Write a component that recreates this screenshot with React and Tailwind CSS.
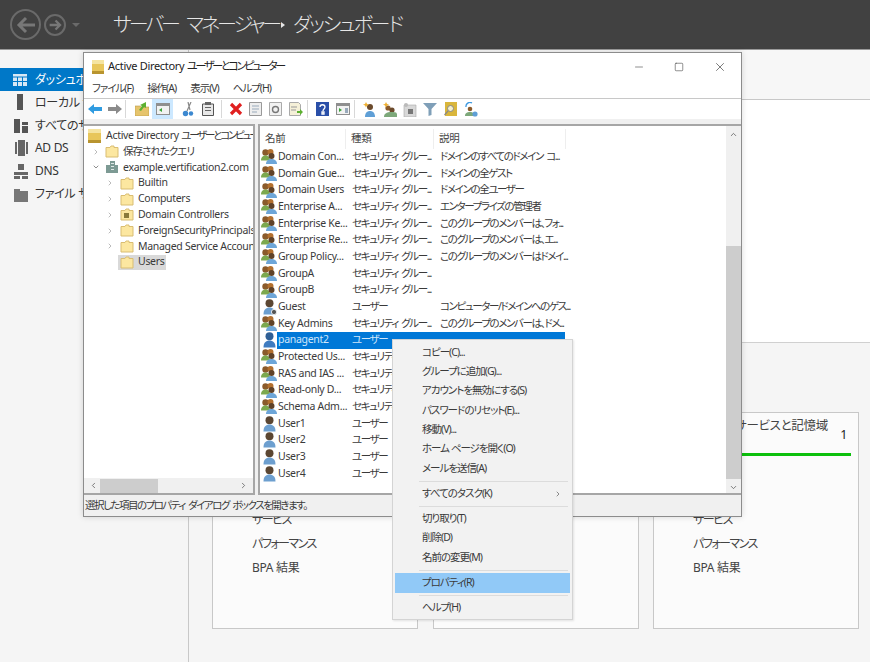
import { ChevronLeft, ChevronRight, ChevronDown, ChevronUp, Minus, X, Square } from "lucide-react";

const Folder = ({ badge }) => (
  <svg className="shrink-0" width="14" height="13" viewBox="0 0 14 13">
    <path d="M1 2.500h4l1-1.500h3v1.500h4v9.500H1z" fill="#fce7a0" stroke="#d9bd72" strokeWidth="1" />
    {badge && <rect x="4" y="5" width="5" height="5" fill="#8a7a3a" />}
  </svg>
);

const GroupIcon = () => (
  <svg className="shrink-0" width="16" height="15" viewBox="0 0 16 15">
    <circle cx="4.500" cy="3.500" r="3.200" fill="#8a5a2b" />
    <path d="M0 11.500c0-3.500 2-5 4.500-5s4.500 1.500 4.500 5z" fill="#7ca84e" />
    <circle cx="9.500" cy="3" r="3" fill="#b3702f" />
    <circle cx="10.500" cy="7" r="3" fill="#5f4229" />
    <path d="M5 15c0-3.500 2.500-5 5.500-5s5.500 1.500 5.500 5z" fill="#6ea6d8" />
  </svg>
);

const UserIcon = ({ dark, guest }) => (
  <svg className="shrink-0" width="14" height="16" viewBox="0 0 14 16">
    <circle cx="6.500" cy="4.200" r="4" fill={dark ? "#2f5f95" : "#5b4632"} />
    <path d="M0.500 15.500c0-5 2.500-7 6-7s6 2 6 7z" fill={dark ? "#3f7cc0" : "#6d9fcf"} />
    {guest && <circle cx="11" cy="13" r="2.600" fill="#555" stroke="#fff" strokeWidth="0.800" />}
  </svg>
);

const Sep = () => <div className="w-px h-[18px] bg-[#d8d8d8]" />;

const rows = [
  ["g", "Domain Con...", "セキュリティ グルー...", "ドメインのすべてのドメイン コ..."],
  ["g", "Domain Gue...", "セキュリティ グルー...", "ドメインの全ゲスト"],
  ["g", "Domain Users", "セキュリティ グルー...", "ドメインの全ユーザー"],
  ["g", "Enterprise A...", "セキュリティ グルー...", "エンタープライズの管理者"],
  ["g", "Enterprise Ke...", "セキュリティ グルー...", "このグループのメンバーは、フォ..."],
  ["g", "Enterprise Re...", "セキュリティ グルー...", "このグループのメンバーは、エ..."],
  ["g", "Group Policy...", "セキュリティ グルー...", "このグループのメンバーはドメイ..."],
  ["g", "GroupA", "セキュリティ グルー...", ""],
  ["g", "GroupB", "セキュリティ グルー...", ""],
  ["guest", "Guest", "ユーザー", "コンピューター/ドメインへのゲス..."],
  ["g", "Key Admins", "セキュリティ グルー...", "このグループのメンバーは、ドメ..."],
  ["sel", "panagent2", "ユーザー", ""],
  ["g", "Protected Us...", "セキュリティ グルー...", ""],
  ["g", "RAS and IAS ...", "セキュリティ グルー...", ""],
  ["g", "Read-only D...", "セキュリティ グルー...", ""],
  ["g", "Schema Adm...", "セキュリティ グルー...", ""],
  ["u", "User1", "ユーザー", ""],
  ["u", "User2", "ユーザー", ""],
  ["u", "User3", "ユーザー", ""],
  ["u", "User4", "ユーザー", ""],
];

const tree = [
  ["Builtin", false],
  ["Computers", false],
  ["Domain Controllers", true],
  ["ForeignSecurityPrincipals", false],
  ["Managed Service Accounts", false],
];

const side = [
  ["ローカル サーバー", "M4 0h6v16H4z", "#555"],
  ["すべてのサーバー", "M1 2h6v14H1zM9 5h6v3H9zM9 9h6v7H9z", "#555"],
  ["AD DS", "M2 2h2v12H2zM5 0h7v16H5zM13 2h2v12h-2z", "#666"],
  ["DNS", "M5 1h6v6H5zM1 9h14v3H1zM1 13h6v3H1zM9 13h6v3H9z", "#666"],
  ["ファイル サービスと記憶域", "M1 3h6v2h8v11H1z", "#777"],
];

const Card = ({ title, count }) => (
  <div className="w-[206px] h-[217px] border border-[#c8c8c8] bg-[#fbfbfb] relative">
    {title && (
      <div className="pl-[36px] pt-[5px] text-[12.5px] text-[#444] leading-[16px] whitespace-nowrap">{title}</div>
    )}
    {count && <div className="absolute right-[11px] top-[13px] text-[12.5px] text-[#222]">{count}</div>}
    <div className="absolute left-[14px] right-[7px] top-[40px] h-[3px] bg-[#0cc00c]" />
    <div className="absolute left-[39px] top-[99px] flex flex-col gap-[8px] text-[12px] leading-[16px] text-[#444] tracking-[-1.500px]">
      <div>サービス</div>
      <div>パフォーマンス</div>
      <div className="tracking-[-0.300px]">BPA 結果</div>
    </div>
  </div>
);

const MenuItem = ({ children, hl, arrow }) => (
  <div className={`h-[19.3px] pl-[27px] pr-[8px] flex items-center justify-between ${hl ? "bg-[#91c9f7]" : ""}`}>
    <span>{children}</span>
    {arrow && <ChevronRight size={8} strokeWidth={2} className="text-[#555]" />}
  </div>
);

const MenuSep = () => <div className="h-px bg-[#dcdcdc] my-[2.500px] ml-[24px] mr-[2px]" />;

export default function App() {
  return (
    <div className="relative w-[870px] h-[662px] overflow-hidden bg-white font-['Noto_Sans','Noto_Sans_CJK_JP',sans-serif] [font-feature-settings:'palt'] tracking-[-0.3px]">
      {/* header */}
      <div className="h-[50px] bg-[#414141] border-b border-[#9a9a9a] flex items-center">
        <div className="ml-[10px] w-[31px] h-[31px] rounded-full border-2 border-[#6a6a6a] flex items-center justify-center">
          <svg width="20" height="18" viewBox="0 0 20 18" fill="none" stroke="#777" strokeWidth="3">
            <path d="M19 9H3M10 2L3 9l7 7" />
          </svg>
        </div>
        <div className="ml-[3px] w-[22px] h-[22px] rounded-full border-2 border-[#6a6a6a] flex items-center justify-center">
          <svg width="13" height="12" viewBox="0 0 20 18" fill="none" stroke="#777" strokeWidth="3.500">
            <path d="M1 9h16M10 2l7 7-7 7" />
          </svg>
        </div>
        <div className="ml-[6px] w-0 h-0 border-x-[4px] border-x-transparent border-t-[4px] border-t-[#6a6a6a]" />
        <div className="ml-[33px] w-[158px] text-[20px] font-light tracking-[-3px] [word-spacing:6px] text-[#e6e6e6] whitespace-nowrap">サーバー マネージャー</div>
        <div className="ml-[10px] w-0 h-0 border-y-[3.500px] border-y-transparent border-l-[4px] border-l-[#e6e6e6]" />
        <div className="ml-[8px] text-[20px] font-light tracking-[-2.200px] text-[#e6e6e6] whitespace-nowrap">ダッシュボード</div>
      </div>

      <div className="flex h-[612px]">
        {/* sidebar */}
        <div className="w-[189px] bg-[#f5f5f5] border-r border-[#c8c8c8] pt-[18px] text-[12px] text-[#333]">
          <div className="h-[23px] bg-[#0078c8] flex items-center text-white">
            <svg className="ml-[13px] mr-[8px] shrink-0" width="14" height="12" viewBox="0 0 14 12">
              <path d="M0 0h14v12H0z" fill="#d8e8f5" />
              <path d="M0 3h14M4.500 3v9M9.500 3v9M0 7.500h14" stroke="#0078c8" />
            </svg>
            <span className="whitespace-nowrap pt-[1px]">ダッシュボード</span>
          </div>
          {side.map(([t, d, c]) => (
            <div key={t} className="h-[22.8px] flex items-center">
              <svg className="ml-[13px] mr-[6px] shrink-0" width="16" height="16" viewBox="0 0 16 16">
                <path d={d} fill={c} />
              </svg>
              <span className="whitespace-nowrap pt-[1px]">{t}</span>
            </div>
          ))}
        </div>

        {/* main */}
        <div className="flex-1 flex flex-col">
          <div className="h-[50px] bg-[#f7f7f7] border-b border-[#c8c8c8]" />
          <div className="h-[243px] bg-white border-b border-[#d0d0d0]" />
          <div className="flex-1 bg-[#f5f5f5] pl-[23px] pt-[69px] flex gap-[14.5px]">
            <Card />
            <Card />
            <Card title="ファイル サービスと記憶域" count="1" />
          </div>
        </div>
      </div>

      {/* AD window */}
      <div className="absolute left-[83px] top-[52px] w-[659px] h-[465px] bg-white border border-[#8c8c8c] flex flex-col text-[10.5px] text-[#3a3a3a] shadow-[0_0_6px_rgba(0,0,0,0.15)]">
        <div className="h-[27px] flex items-center shrink-0">
          <svg className="ml-[8px] mr-[4px]" width="12" height="14" viewBox="0 0 12 14">
            <path d="M0 0h12v14H0z" fill="#e8c65a" />
            <path d="M0 0h12v4H0z" fill="#f5e4a0" />
            <path d="M0 11h12v3H0z" fill="#b8942f" />
          </svg>
          <span className="text-[11px] text-[#222] whitespace-nowrap">
            Active Directory <span className="tracking-[-2.200px]">ユーザーとコンピューター</span>
          </span>
          <div className="ml-auto flex items-center text-[#444]">
            <Minus size={12} strokeWidth={1.2} className="mr-[29px]" />
            <Square size={10} strokeWidth={1.4} className="mr-[29px]" />
            <X size={14} strokeWidth={1.2} className="mr-[14px]" />
          </div>
        </div>
        <div className="h-[19px] flex items-center gap-[14px] pl-[8px] border-b border-[#c8c8c8] shrink-0 tracking-[-1px]">
          <span>ファイル(F)</span>
          <span>操作(A)</span>
          <span>表示(V)</span>
          <span>ヘルプ(H)</span>
        </div>

        {/* toolbar */}
        <div className="h-[20px] flex items-center shrink-0">
          <div className="ml-[3px] w-[15px] flex justify-center">
            <svg width="14" height="12" viewBox="0 0 14 12"><path d="M0 6l6-5v3h8v4H6v3z" fill="#2f9be0" /></svg>
          </div>
          <div className="ml-[5px] w-[15px] flex justify-center">
            <svg width="14" height="12" viewBox="0 0 14 12"><path d="M14 6L8 1v3H0v4h8v3z" fill="#8a8a8a" /></svg>
          </div>
          <div className="ml-[3px]"><Sep /></div>
          <div className="ml-[9px]">
            <svg width="14" height="14" viewBox="0 0 14 14">
              <path d="M0 4h5l1 1h8v9H0z" fill="#e6c46c" stroke="#b89b4a" strokeWidth="0.600" />
              <path d="M4 8l3-4-2-1 6-3v6l-2-1-3 4z" fill="#5cb030" />
            </svg>
          </div>
          <div className="ml-[3px] w-[21px] h-[20px] bg-[#cce8ff] flex items-center justify-center">
            <svg width="14" height="12" viewBox="0 0 14 12">
              <path d="M0 0h14v12H0z" fill="#8f8f8f" />
              <path d="M1 3h12v8H1z" fill="#f2f2f2" />
              <path d="M3 7l3-2v4z" fill="#3aa53a" />
            </svg>
          </div>
          <div className="ml-[9px]">
            <svg width="12" height="15" viewBox="0 0 12 15">
              <path d="M9 0L5 9M6 0l2 8" stroke="#888" strokeWidth="1.200" />
              <circle cx="3.500" cy="11.500" r="2.700" fill="#3c88d0" />
              <circle cx="9" cy="11.500" r="2.200" fill="#3c88d0" />
            </svg>
          </div>
          <div className="ml-[8px]">
            <svg width="12" height="14" viewBox="0 0 12 14">
              <path d="M0.500 2h11v11.500H0.500z" fill="#e8e8e8" stroke="#555" />
              <path d="M3 0h6v3H3zM3 5h6v1H3zM3 8h6v1H3z" fill="#666" />
            </svg>
          </div>
          <div className="ml-[7px]"><Sep /></div>
          <div className="ml-[7px]">
            <svg width="14" height="14" viewBox="0 0 14 14">
              <path d="M2 2l10 10M12 2L2 12" stroke="#e02020" strokeWidth="3.200" />
            </svg>
          </div>
          <div className="ml-[6px]">
            <svg width="13" height="14" viewBox="0 0 13 14">
              <path d="M0.500 0.500h12v13H0.500z" fill="#eee" stroke="#999" />
              <path d="M3 4h7M3 7h7M3 10h5" stroke="#9ab" />
            </svg>
          </div>
          <div className="ml-[7px]">
            <svg width="13" height="14" viewBox="0 0 13 14">
              <path d="M0.500 0.500h12v13H0.500z" fill="#f2f2f2" stroke="#aaa" />
              <circle cx="6.500" cy="7.500" r="3" fill="none" stroke="#777" strokeWidth="1.400" />
            </svg>
          </div>
          <div className="ml-[7px]">
            <svg width="14" height="14" viewBox="0 0 14 14">
              <path d="M0.500 0.500h9l2 2v11h-11z" fill="#f5f0d8" stroke="#aaa" />
              <path d="M2 5h6M2 8h5" stroke="#999" />
              <path d="M8 9h3V7l3 3-3 3v-2H8z" fill="#5cb030" />
            </svg>
          </div>
          <div className="ml-[4px]"><Sep /></div>
          <div className="ml-[8px]">
            <svg width="13" height="14" viewBox="0 0 13 14">
              <path d="M0 0h13v14H0z" fill="#2a4fa8" />
              <path d="M4 5c0-3 5-3 5 0 0 2-2 2-2 4M6 10h2v2H6z" fill="none" stroke="#fff" strokeWidth="1.300" />
            </svg>
          </div>
          <div className="ml-[7px]">
            <svg width="14" height="12" viewBox="0 0 14 12">
              <path d="M0 0h14v12H0z" fill="#8f8f8f" />
              <path d="M1 3h12v8H1z" fill="#f2f2f2" />
              <path d="M3 5l3 2-3 2z" fill="#3aa53a" />
              <path d="M9 5h3v5H9z" fill="#9ab" />
            </svg>
          </div>
          <div className="ml-[4px]"><Sep /></div>
          <div className="ml-[8px] flex items-center gap-[6px]">
            <svg width="14" height="15" viewBox="0 0 14 15">
              <circle cx="7" cy="5" r="3" fill="#6b4a2c" />
              <path d="M2 15c0-4 2-6 5-6s5 2 5 6z" fill="#5f9fd6" />
              <path d="M3 0l1 2 2 .5-2 1-1 2-1-2-2-1 2-.5z" fill="#f0b030" />
            </svg>
            <svg width="14" height="15" viewBox="0 0 14 15">
              <circle cx="5" cy="6" r="2.600" fill="#8a5a2b" />
              <circle cx="9" cy="8" r="2.600" fill="#6b4a2c" />
              <path d="M1 15c0-3 2-5 8-5s5 2 5 5z" fill="#7da87a" />
              <path d="M3 0l1 2 2 .5-2 1-1 2-1-2-2-1 2-.5z" fill="#f0b030" />
            </svg>
            <svg width="14" height="15" viewBox="0 0 14 15">
              <path d="M1 3h12v12H1z" fill="#d8d8d8" stroke="#aaa" strokeWidth="0.600" />
              <path d="M5 7h5v5H5z" fill="#777" />
              <circle cx="3" cy="3" r="2" fill="#bbb" />
            </svg>
            <svg width="14" height="14" viewBox="0 0 14 14">
              <path d="M0 1h14L8.500 7v6l-3 1V7z" fill="#7f9fb8" />
            </svg>
            <svg className="ml-[1px]" width="13" height="14" viewBox="0 0 13 14">
              <path d="M1 0h12v14H1z" fill="#d9b63c" />
              <circle cx="6.500" cy="6.500" r="3" fill="#f3eecb" stroke="#888" />
              <path d="M4 9l-3.500 4" stroke="#888" strokeWidth="1.200" />
            </svg>
            <svg width="15" height="15" viewBox="0 0 15 15">
              <path d="M3 5a4 4 0 0 1 6-4" fill="none" stroke="#3c98e0" strokeWidth="1.300" />
              <circle cx="7" cy="7" r="2.300" fill="#8a5a2b" />
              <path d="M2 14c0-3 2-4 5-4s4 1 4 4z" fill="#7da87a" />
              <circle cx="12" cy="12" r="2.600" fill="#5f9fd6" />
            </svg>
          </div>
        </div>
        <div className="h-[5px] bg-[#f0f0f0] shrink-0" />

        {/* panes */}
        <div className="h-[371px] flex bg-[#f0f0f0] shrink-0">
          {/* tree */}
          <div className="w-[171px] bg-white border-y-2 border-r-2 border-[#a6a6a6] flex flex-col overflow-hidden">
            <div className="flex-1 overflow-hidden pt-[1px]">
              <div className="h-[15.8px] mt-[1px] flex items-center pl-[4px] whitespace-nowrap">
                <svg className="mr-[5px] shrink-0" width="13" height="14" viewBox="0 0 13 14">
                  <path d="M0 0h13v14H0z" fill="#e8c65a" />
                  <path d="M0 0h13v4H0z" fill="#f5e4a0" />
                  <path d="M0 11h13v3H0z" fill="#b8942f" />
                </svg>
                <span>
                  Active Directory <span className="tracking-[-2.200px]">ユーザーとコンピューター</span>
                </span>
              </div>
              <div className="h-[15.8px] flex items-center pl-[8px] whitespace-nowrap">
                <ChevronRight size={8} className="text-[#999] mr-[5px] shrink-0" />
                <Folder />
                <span className="ml-[4px] tracking-[-1px]">保存されたクエリ</span>
              </div>
              <div className="h-[15.8px] flex items-center pl-[8px] whitespace-nowrap">
                <ChevronDown size={8} className="text-[#555] mr-[5px] shrink-0" />
                <svg width="14" height="14" viewBox="0 0 14 14" className="shrink-0">
                  <path d="M1 5h4v8H1zM5 1h5v12H5zM10 5h3v8h-3z" fill="#7d9a94" />
                  <path d="M6 3h3v1H6zM6 6h3v1H6zM6 9h3v1H6z" fill="#dfe8e6" />
                </svg>
                <span className="ml-[4px]">example.vertification2.com</span>
              </div>
              {tree.map(([t, badge]) => (
                <div key={t} className="h-[15.8px] flex items-center pl-[22px] whitespace-nowrap">
                  <ChevronRight size={8} className="text-[#999] mr-[6px] shrink-0" />
                  <Folder badge={badge} />
                  <span className="ml-[4px]">{t}</span>
                </div>
              ))}
              <div className="h-[15.8px] flex items-center pl-[34px] whitespace-nowrap">
                <div className="h-[15px] w-[48px] bg-[#d9d9d9] flex items-center pl-[2px]">
                  <Folder />
                  <span className="ml-[4px]">Users</span>
                </div>
              </div>
            </div>
            <div className="h-[15px] bg-[#f0f0f0] flex items-center shrink-0 px-[5px]">
              <ChevronLeft size={9} className="text-[#555] shrink-0" />
              <div className="w-[58px] h-[14px] bg-[#cdcdcd] ml-[2px]" />
              <ChevronRight size={9} className="text-[#555] shrink-0 ml-auto" />
            </div>
          </div>

          <div className="w-[3px]" />

          {/* list */}
          <div className="flex-1 bg-white border-y-2 border-l-2 border-[#a6a6a6] flex">
            <div className="flex-1 min-w-0">
              <div className="h-[22.5px] pt-[3px] flex items-stretch text-[#444]">
                <div className="w-[86px] pl-[5px] flex items-center border-r border-[#eee]">名前</div>
                <div className="w-[88px] pl-[5px] flex items-center border-r border-[#eee]">種類</div>
                <div className="w-[132px] pl-[5px] flex items-center border-r border-[#eee]">説明</div>
              </div>
              {rows.map(([k, name, type, desc]) => (
                <div key={name} className="h-[16.68px] flex items-center whitespace-nowrap">
                  <div className="w-[17px] shrink-0 flex justify-end">
                    {k === "g" && <GroupIcon />}
                    {k === "u" && <UserIcon />}
                    {k === "guest" && <UserIcon guest />}
                    {k === "sel" && <UserIcon dark />}
                  </div>
                  <div className={`h-full flex items-center w-[288px] ${k === "sel" ? "bg-[#0078d7] text-[#cfe6fa]" : ""}`}>
                    <div className="w-[75px] pl-[1px] shrink-0">{name}</div>
                    <div className="w-[88px] shrink-0 tracking-[-1.400px] [word-spacing:2px]">{type}</div>
                    <div className="tracking-[-1.400px] [word-spacing:2px]">{desc}</div>
                  </div>
                </div>
              ))}
            </div>
            <div className="w-[15px] bg-[#f0f0f0] flex flex-col items-center shrink-0">
              <ChevronUp size={9} className="text-[#555] mt-[4px] shrink-0" />
              <div className="w-full h-[233px] bg-[#cdcdcd] mt-[107px]" />
              <ChevronDown size={9} className="text-[#555] mt-[4px]" />
            </div>
          </div>
        </div>

        {/* status */}
        <div className="flex-1 bg-[#f0f0f0] flex items-center pl-[1px] whitespace-nowrap tracking-[-1.500px] [word-spacing:2px]">
          選択した項目のプロパティ ダイアログ ボックスを開きます。
        </div>
      </div>

      {/* context menu */}
      <div className="absolute left-[392px] top-[339px] w-[181px] h-[281px] bg-[#f2f2f2] border border-[#d4d4d4] pt-[3px] px-[2px] text-[10.5px] text-[#3a3a3a] tracking-[-1px] shadow-[1px_1px_2px_rgba(0,0,0,0.1)]">
        <MenuItem>コピー(C)...</MenuItem>
        <MenuItem>グループに追加(G)...</MenuItem>
        <MenuItem>アカウントを無効にする(S)</MenuItem>
        <MenuItem>パスワードのリセット(E)...</MenuItem>
        <MenuItem>移動(V)...</MenuItem>
        <MenuItem>ホーム ページを開く(O)</MenuItem>
        <MenuItem>メールを送信(A)</MenuItem>
        <MenuSep />
        <MenuItem arrow>すべてのタスク(K)</MenuItem>
        <MenuSep />
        <MenuItem>切り取り(T)</MenuItem>
        <MenuItem>削除(D)</MenuItem>
        <MenuItem>名前の変更(M)</MenuItem>
        <MenuSep />
        <MenuItem hl>プロパティ(R)</MenuItem>
        <MenuSep />
        <MenuItem>ヘルプ(H)</MenuItem>
      </div>
    </div>
  );
}
